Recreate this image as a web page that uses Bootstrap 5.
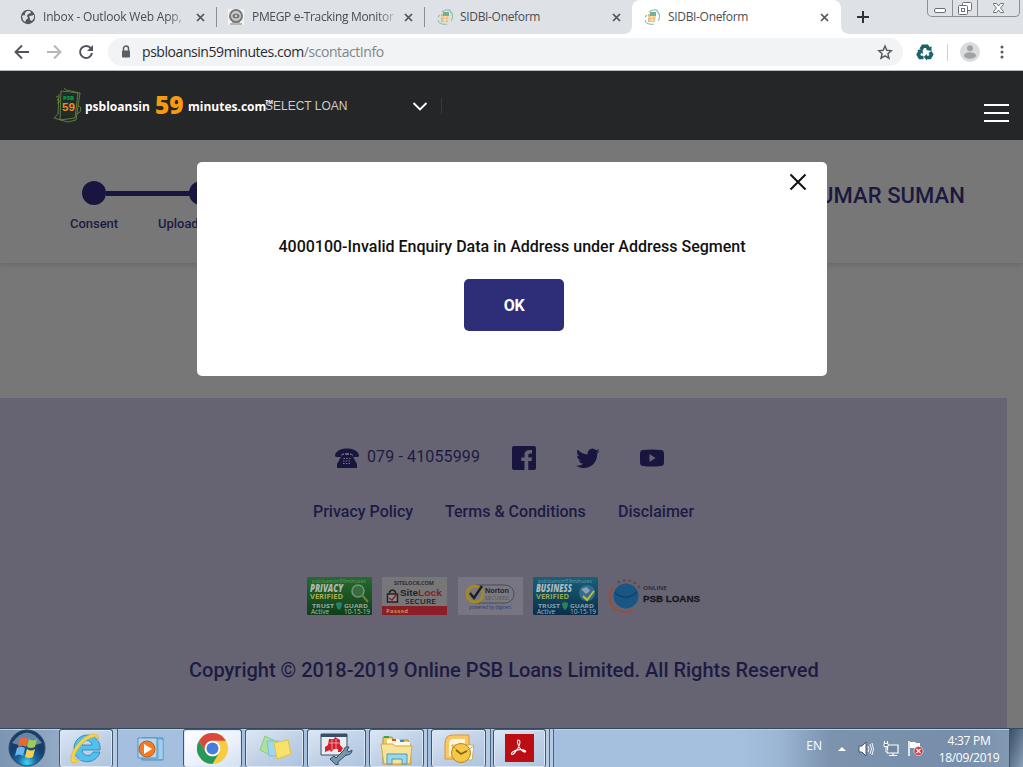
<!DOCTYPE html>
<html lang="en">
<head>
<meta charset="utf-8">
<meta name="viewport" content="width=device-width, initial-scale=1">
<title>SIDBI-Oneform</title>
<link href="https://cdn.jsdelivr.net/npm/bootstrap@5.3.0/dist/css/bootstrap.min.css" rel="stylesheet">
<style>
:root{--navy:#18163f;--ink:#1d1b44;--ui:"Open Sans","Noto Sans",sans-serif}
html,body{height:100%;overflow:hidden}
body{font-family:Roboto,sans-serif;background:#777;color:var(--ink)}
svg{display:block;flex:none}
.desktop{width:1023px;height:767px}
/* browser chrome */
.tabstrip{height:34px;background:#dee1e6;font:12px/34px var(--ui);color:#4a4d52}
.tab-item{flex:none;padding-left:20px}
.tab-item .favicon{width:16px;height:16px;margin-right:7px}
.tab-title{width:142px;overflow:hidden;white-space:nowrap;letter-spacing:-.2px}
.tab-title.tight{letter-spacing:-.33px}
.tab-title.fade-end{-webkit-mask-image:linear-gradient(90deg,#000 125px,rgba(0,0,0,.25) 142px)}
.tab-sep{border-left:1px solid #8a8d92;height:20px}
.tab-active{background:#fff;border-radius:8px 8px 0 0;width:209px;height:34px}
.under-left{background:#fff}
.tab-before{background:#dee1e6;border-radius:0 0 8px 0;width:207px;height:34px}
.tab-after{background:#dee1e6;border-radius:0 0 0 8px}
.win-controls{height:17px;width:93px;border:1px solid #8b8f96;border-top:0;border-radius:0 0 5px 5px;margin-left:58px}
.win-controls>span{border-right:1px solid #8b8f96;height:16px}
.win-controls>span:last-child{border:0}
.toolbar-row{height:37px;background:#fff;border-bottom:1px solid #b6b8bb}
.omnibox{height:28px;width:795px;margin-left:14px;border-radius:14px;background:#f1f3f4;font:14px/28px var(--ui);color:#80868b;padding-left:11px}
.omnibox b{font-weight:400;color:#2a2b2e}
.url-text{letter-spacing:-.44px;width:744px;margin-left:9px}
/* site header */
.site-head{height:69px;background:#252627}
.brand-text{font:700 12px/20px "Open Sans",sans-serif;color:#fff;padding-top:2px}
.brand-text>span{flex:none}
.brand-text .big{font-size:24.5px;font-weight:800;color:#f79a10;line-height:20px;margin-top:-3px}
.loan-select{font:12px/20px "Liberation Sans",sans-serif;color:#ccc}
.burger span{display:block;width:25px;height:2px;background:#fff;margin-bottom:6px}
/* page */
.stepper-bar{height:123px;box-shadow:0 2px 5px rgba(0,0,0,.12);background:#777}
.step-label{font-weight:500;font-size:13px;line-height:16px;letter-spacing:-.03px}
.dot{width:24px;height:24px;border-radius:50%;background:var(--navy)}
.rail{width:85px;height:5px;background:var(--navy)}
.applicant{font-weight:500;font-size:22px;line-height:28px;letter-spacing:.1px;color:#1b193f}
.site-foot{width:1007px;height:330px;background:#666472}
.foot-phone{font-size:16px;letter-spacing:.13px;width:145px;padding-left:8px;margin-top:-2px}
.foot-links{font-weight:500;font-size:16px;line-height:20px}
.copy{font-size:20px;line-height:24px;font-weight:500;letter-spacing:-.005px;white-space:nowrap}
.alert-box{left:197px;top:162px;width:630px;height:214px;background:#fff;border-radius:5px;color:#111}
.alert-box .message{font-weight:500;font-size:16px;line-height:20px;white-space:nowrap}
.ok-btn{width:100px;height:52px;background:#2e2e78;border-radius:5px;border:0;color:#fff;font-weight:700;font-size:16px;padding-top:8px;letter-spacing:-.3px}
/* taskbar */
.taskbar{height:39px;background:linear-gradient(90deg,#7b94af 0,#8da5c0 45px,#a5c0df 115px,#a5c0df 740px,#9bb5d3 780px,#7c93ae 830px,#778eaa 960px,#8299b2 1010px);border-top:1px solid #35495e;box-shadow:inset 0 1px #bed1e6}
.task{height:38px;border:1px solid #44566b;border-bottom:0;border-radius:3px;background:linear-gradient(150deg,#dce7f4,#bfd0e6 55%,#adc4df);box-shadow:inset 0 0 0 1px #dbe7f4}
.task.lit{background:linear-gradient(150deg,#fff,#e9f0fa 60%,#d0dff1)}
.stack-edge{width:5px;height:38px;border-right:1px solid #50657d;background:#b5cae3}
.tray{font:12px/16px var(--ui);color:#fff}
.clock{letter-spacing:-.3px;line-height:17px}
.show-desk{width:14px;height:38px;border-left:1px solid #44566b;background:linear-gradient(110deg,#3c4f64,#6f879f 70%,#8ea4ba)}
</style>
</head>
<body>
<svg width="0" height="0" class="position-absolute">
  <defs>
    <g id="sidbi"><path d="M5 3C7 1 11 0 14 2M13 2c3 3 3 7 1 10M1 11c0 3 4 5 9 4M3 6l-2 2" fill="none" stroke="#8fc4b0" stroke-width="1.200"/><path d="M4 5h8l-1 8H4z" fill="#ecb56f"/><path d="M6 3h6v4H6z" fill="#74b09a"/><path d="M4 8h8M5 11h7M8 7v6" stroke="#fff5d5" stroke-width=".8"/></g>
    <path id="x" d="M1 1l7 7M8 1l-7 7" stroke="#505357" stroke-width="1.7" fill="none"/>
    <linearGradient id="gr" x2="0" y2="1"><stop stop-color="#246b2e"/><stop offset="1" stop-color="#113d1c"/></linearGradient>
    <linearGradient id="bl" x2="0" y2="1"><stop stop-color="#176178"/><stop offset="1" stop-color="#0b2d4a"/></linearGradient>
    <radialGradient id="orb" cy=".9"><stop stop-color="#45d5f4"/><stop offset=".5" stop-color="#176aa4"/><stop offset="1" stop-color="#173e6b"/></radialGradient>
  </defs>
</svg>
<div class="desktop d-flex flex-column position-relative">

  <div class="tabstrip d-flex">
    <div class="tab-item d-flex align-items-center" style="width:216px">
      <svg class="favicon" viewBox="0 0 16 16"><circle cx="8" cy="8" r="7.200" fill="#55585d"/><path d="M2 7l2-1 3 1 1 2-2 2-1 2-2-2zM7 2l3 0 1 2-3 1-1 2-2-1 0-2zM10 7l4-1 0 3-2 3-2-1 0-2-1-1z" fill="#dee1e6"/></svg>
      <span class="tab-title fade-end">Inbox - Outlook Web App,</span>
      <svg class="ms-auto" style="margin-right:11px" width="9" height="9"><use href="#x"/></svg>
    </div>
    <div class="tab-item d-flex align-items-center position-relative" style="width:209px;padding-left:0">
      <div class="tab-sep"></div>
      <svg class="favicon" style="margin-left:11px;margin-right:8px" viewBox="0 0 16 16"><path fill="#f5f5f5" d="M0 0h16v16H0z"/><circle cx="8" cy="7" r="6" fill="#ccc" stroke="#777" stroke-width="2"/><ellipse cx="8" cy="7" rx="3.500" ry="2.500" fill="#777"/><circle cx="8" cy="7" r="1" fill="#eee"/><path d="M2 15h12M4 13h8" stroke="#777"/></svg>
      <span class="tab-title tight fade-end">PMEGP e-Tracking Monitor</span>
      <svg class="ms-auto" style="margin-right:12px" width="9" height="9"><use href="#x"/></svg>
    </div>
    <div class="under-left">
      <div class="tab-before d-flex align-items-center">
        <div class="tab-sep" style="margin-left:-1px"></div>
        <svg style="margin-left:12px;margin-right:7px" width="16" height="16"><use href="#sidbi"/></svg>
        <span class="tab-title tight">SIDBI-Oneform</span>
        <svg style="margin-left:10px" width="9" height="9"><use href="#x"/></svg>
      </div>
    </div>
    <div style="background:#dee1e6"><div class="tab-active d-flex align-items-center">
      <svg style="margin-left:12px;margin-right:8px" width="16" height="16"><use href="#sidbi"/></svg>
      <span class="tab-title tight">SIDBI-Oneform</span>
      <svg style="margin-left:10px" width="9" height="9"><use href="#x"/></svg>
    </div></div>
    <div class="under-left flex-grow-1"><div class="tab-after d-flex h-100">
      <svg style="margin:11px 0 0 16px" width="12" height="12"><path d="M6 0v12M0 6h12" stroke="#303236" stroke-width="2"/></svg>
      <div class="win-controls d-flex">
        <span style="width:25px"><svg width="24" height="16"><rect x="6.500" y="8.500" width="11" height="4" rx="1.500" fill="#fff" stroke="#6b6e75"/></svg></span>
        <span style="width:25px"><svg width="24" height="16" fill="#fff" stroke="#6b6e75"><rect x="9.500" y="2.500" width="9" height="8" rx="1"/><rect x="5.500" y="5.500" width="9" height="9" rx="1"/><rect x="8.500" y="8.500" width="3" height="3"/></svg></span>
        <span class="flex-grow-1"><svg width="41" height="16"><path d="M15.500 3.500h3l2 2.500 2-2.500h3v1l-3 3.500 3 3.500v1h-3l-2-2.500-2 2.500h-3v-1l3-3.500-3-3.500z" fill="#fff" stroke="#6b6e75"/></svg></span>
      </div>
    </div></div>
  </div>

  <div class="toolbar-row d-flex align-items-center">
    <svg style="margin-left:14px" width="80" height="16" fill="none" stroke-width="1.900"><path d="M15 8H2M8 1.500L1.500 8 8 14.500" stroke="#515458"/><path d="M33 8h13M40 1.500L46.500 8 40 14.500" stroke="#b4b6b9"/><path d="M77 4.500A6 6 0 1 0 78 9" stroke="#515458" stroke-width="2"/><path d="M79 1v6h-6z" fill="#515458"/></svg>
    <div class="omnibox d-flex align-items-center">
      <svg style="margin-left:2px" width="12" height="14"><path d="M2.500 6V3.500a2.500 2.500 0 0 1 5 0V6" fill="none" stroke="#5b5e62" stroke-width="1.500"/><rect x="1" y="5.500" width="8" height="7" rx="1" fill="#5b5e62"/></svg>
      <span class="url-text"><b>psbloansin59minutes.com</b>/scontactInfo</span>
      <svg style="margin-left:-9px" width="16" height="16"><path d="M8 2l1.800 4.300 4.700.4-3.600 3 1.100 4.500L8 11.800l-4 2.400 1.100-4.500-3.600-3 4.700-.4z" fill="none" stroke="#55585c" stroke-width="1.400"/></svg>
    </div>
    <svg style="margin-left:13px" width="18" height="18" viewBox="0 0 18 18" fill="none" stroke="#1c6367" stroke-width="3.600"><path d="M5 6.500L7 3.300h4l1.500 2.500"/><path d="M14 9l1.500 2.500-1.700 3H10"/><path d="M7.500 14.500H4L2.300 11.500 4 8.500"/><g stroke="none" fill="#1c6367"><path d="M10 7l5.500 1V3zM11 11v6.500L7.800 14zM1 7l5.500-1L7 11z"/></g></svg>
    <div style="width:1px;height:17px;background:#cfd1d4;margin-left:13px"></div>
    <svg style="margin-left:12px" width="20" height="20"><circle cx="10" cy="10" r="10" fill="#dadbdd"/><circle cx="10" cy="6.200" r="3" fill="#a1a2a4"/><ellipse cx="10" cy="13.500" rx="6" ry="3.200" fill="#a1a2a4"/></svg>
    <svg style="margin-left:19px" width="6" height="16" fill="#55585c"><circle cx="3" cy="3" r="1.500"/><circle cx="3" cy="8" r="1.500"/><circle cx="3" cy="13" r="1.500"/></svg>
  </div>

  <header class="site-head d-flex align-items-center">
    <svg style="margin-left:53px" width="30" height="36" viewBox="0 0 30 36"><g fill="none" stroke="#64893e" stroke-width=".9"><path d="M8 3l17 2-3 25-15 2zM11 0l2 2 14 3-4 27M6 6l-1 20-4 4 14 4 8-2M3 9c3-1 4 1 1 3 3 0 4 2 0 3M25 18q4 0 2 6l-3 2"/></g><path d="M9 4l13 1-1 24-13-1z" fill="#222d28"/><text x="10" y="12" font-family="Open Sans" font-weight="800" font-size="5" textLength="11" lengthAdjust="spacingAndGlyphs" fill="#0b9c47">PSB</text><text x="9" y="23" font-family="Liberation Sans" font-weight="700" font-size="11" textLength="13" lengthAdjust="spacingAndGlyphs" fill="#f28a17">59</text></svg>
    <div class="brand-text d-flex align-items-center text-nowrap" style="margin-left:2px;width:180px"><span style="width:70px">psbloansin</span><span class="big" style="width:33px">59</span><span>minutes.com</span><span style="font-size:5px;margin-top:-9px;margin-left:-1px">TM</span></div>
    <span class="loan-select text-nowrap" style="width:147px">SELECT LOAN</span>
    <svg width="16" height="12"><path d="M1.500 3l6.500 6.500L14.500 3" fill="none" stroke="#fff" stroke-width="1.900"/></svg>
    <div style="width:1px;height:16px;background:#393a3c;margin-left:13px"></div>
    <div class="burger ms-auto" style="margin-right:14px;padding-top:21px"><span></span><span></span><span></span></div>
  </header>

  <main class="flex-grow-1 d-flex flex-column">
    <section class="stepper-bar d-flex">
      <div style="padding:41px 0 0 70px;width:500px">
        <div class="d-flex align-items-center" style="margin-left:12px"><div class="dot"></div><div class="rail"></div><div class="dot" style="margin-left:-2px"></div></div>
        <div class="d-flex step-label" style="margin-top:11px"><span style="width:88px">Consent</span><span>Upload</span></div>
      </div>
      <div class="applicant ms-auto" style="padding-top:42px;margin-right:58px">UMAR SUMAN</div>
    </section>
    <footer class="site-foot mt-auto d-flex flex-column">
      <div class="d-flex align-items-center" style="margin:47px 0 0 335px;height:26px">
        <svg width="24" height="20" viewBox="0 0 24 20"><path d="M0 8C0-2 24-2 24 8l-1 1h-5l-.5-3c-3-1.500-8-1.500-11 0L6 9H1z" fill="#18163f"/><path d="M7 7h2V5h1v2h4V5h1v2h2l5 9v4H2v-4z" fill="#18163f"/><path d="M8.500 10.500h7M8 13h8M8 15.500h8" stroke="#77758a" stroke-width="1" stroke-dasharray="1.500 1.300"/></svg>
        <span class="foot-phone">079 - 41055999</span>
        <svg style="margin-left:8px" width="24" height="24"><rect width="24" height="24" rx="2" fill="#18163f"/><path d="M16.300 24v-9h3.200l.5-3.600h-3.700V9.200c0-1.100.4-1.800 1.900-1.800H20V4.100c-4.600-.7-7.500.7-7.500 4.500v2.800H9.300V15h3.200v9z" fill="#666472"/></svg>
        <svg style="margin-left:40px" width="24" height="24" viewBox="0 0 24 24"><path d="M23.600 4.900c-.9.400-1.800.7-2.700.8a4.800 4.800 0 0 0 2.100-2.700c-1 .6-2 1-3.100 1.200a4.800 4.800 0 0 0-8.200 4.400A13.700 13.700 0 0 1 1.800 3.600a4.800 4.800 0 0 0 1.500 6.500c-.8 0-1.500-.2-2.200-.6v.1a4.800 4.800 0 0 0 3.900 4.700c-.7.200-1.500.2-2.200.1a4.800 4.800 0 0 0 4.500 3.300A9.700 9.700 0 0 1 .2 19.700c9.600 6 21.500-.2 21-12.400 1-.7 1.800-1.500 2.400-2.400z" fill="#18163f"/></svg>
        <svg style="margin-left:40px" width="24" height="18"><path d="M3 1Q12 0 21 1q3 0 3 4v8q0 4-3 4-9 1-18 0-3 0-3-4V5q0-4 3-4z" fill="#18163f"/><path d="M9.500 5v8l6-4z" fill="#666472"/></svg>
      </div>
      <div class="foot-links d-flex text-nowrap" style="margin:31px 0 0 313px"><span style="width:132px">Privacy Policy</span><span style="width:173px">Terms &amp; Conditions</span><span>Disclaimer</span></div>
      <div class="d-flex" style="margin:54px 0 0 307px;font-family:'Open Sans'">
        <svg width="65" height="40" viewBox="0 0 65 40"><rect y="1" width="65" height="38" rx="1" fill="url(#gr)"/><circle cx="51" cy="15" r="6" fill="#356d3d" stroke="#769278" stroke-width="1.500"/><path d="M55 19l6 7" stroke="#6d7f45" stroke-width="2"/><text x="5" y="7" font-size="6" fill="#68936b" textLength="54" lengthAdjust="spacingAndGlyphs">psbloansin59minutes</text><text x="3" y="16" font-size="10" font-weight="800" font-style="italic" fill="#b0b9ae" textLength="33" lengthAdjust="spacingAndGlyphs">PRIVACY</text><text x="3" y="23" font-size="7" font-weight="700" fill="#a4ad51" textLength="33" lengthAdjust="spacingAndGlyphs">VERIFIED</text><text x="5" y="31.500" font-size="5" font-weight="700" fill="#9aaa9c" textLength="22" lengthAdjust="spacingAndGlyphs">TRUST</text><text x="37" y="31.500" font-size="5" font-weight="700" fill="#9aaa9c" textLength="24" lengthAdjust="spacingAndGlyphs">GUARD</text><path d="M29 27l3-1 3 1q0 5-3 7-3-2-3-7" fill="#26806a"/><text x="4" y="38" font-size="6.500" fill="#b1bcaf">Active</text><text x="37" y="38" font-size="6.500" fill="#b1bcaf" textLength="26">10-15-19</text></svg>
        <svg style="margin-left:10px" width="65" height="40" viewBox="0 0 65 40"><rect y="1" width="65" height="38" fill="#777678"/><path d="M0 30h65v9H0z" fill="#8b1e27"/><text x="12" y="9" font-size="6" font-weight="700" fill="#302d32" textLength="40" lengthAdjust="spacingAndGlyphs">SITELOCK.COM</text><path d="M7.500 18v-2q3-4 6 0v2" fill="none" stroke="#222" stroke-width="1.500"/><rect x="5.500" y="18" width="10" height="8" fill="#8a898b" stroke="#222" stroke-width="1.500"/><path d="M7 22l3 2 5-6" fill="none" stroke="#8e1e26" stroke-width="1.500"/><text x="18" y="20" font-size="9.500" font-weight="700" font-family="Liberation Sans" fill="#211f23" textLength="18" lengthAdjust="spacingAndGlyphs">Site</text><text x="36" y="20" font-size="9.500" font-weight="700" font-family="Liberation Sans" fill="#831e26" textLength="24" lengthAdjust="spacingAndGlyphs">Lock</text><text x="23" y="27.500" font-size="7.500" font-weight="600" fill="#242126" textLength="31" lengthAdjust="spacingAndGlyphs">SECURE</text><text x="4" y="37" font-size="6" font-weight="700" fill="#c98b51" textLength="22">Passed</text></svg>
        <svg style="margin-left:11px" width="65" height="40" viewBox="0 0 65 40"><rect y="1" width="65" height="38" fill="#777582"/><rect x="9" y="9" width="47" height="18" rx="9" fill="#7b7980" stroke="#4d4b55"/><circle cx="17" cy="18" r="8" fill="none" stroke="#a28b24" stroke-width="3"/><path d="M12 17l4 5 8-12" fill="none" stroke="#1f1e2b" stroke-width="2.500"/><text x="27" y="17" font-size="8" font-weight="700" font-family="Liberation Sans" fill="#252331" textLength="24" lengthAdjust="spacingAndGlyphs">Norton</text><text x="27" y="24" font-size="5" fill="#55535f" textLength="24">SECURED</text><text x="11" y="33" font-size="5.500" fill="#283c73" textLength="42" lengthAdjust="spacingAndGlyphs">powered by digicert</text></svg>
        <svg style="margin-left:10px" width="65" height="40" viewBox="0 0 65 40"><rect y="1" width="65" height="38" rx="1" fill="url(#bl)"/><circle cx="54" cy="17" r="8" fill="#336b90"/><path d="M48 13l6-2 3 4-4 3zM57 19l4-3" fill="#89a2af"/><path d="M50 20l4 4 7-9" fill="none" stroke="#b7bf3a" stroke-width="2"/><text x="5" y="7" font-size="6" fill="#6798a9" textLength="54" lengthAdjust="spacingAndGlyphs">psbloansin59minutes</text><text x="3" y="16" font-size="10" font-weight="800" font-style="italic" fill="#acbac1" textLength="36" lengthAdjust="spacingAndGlyphs">BUSINESS</text><text x="3" y="23" font-size="7" font-weight="700" fill="#91a755" textLength="33" lengthAdjust="spacingAndGlyphs">VERIFIED</text><text x="5" y="31.500" font-size="5" font-weight="700" fill="#8ea4af" textLength="22" lengthAdjust="spacingAndGlyphs">TRUST</text><text x="37" y="31.500" font-size="5" font-weight="700" fill="#8ea4af" textLength="24" lengthAdjust="spacingAndGlyphs">GUARD</text><path d="M29 27l3-1 3 1q0 5-3 7-3-2-3-7" fill="#26845a"/><text x="4" y="38" font-size="6.500" fill="#a2b4be">Active</text><text x="37" y="38" font-size="6.500" fill="#a2b4be" textLength="26">10-15-19</text></svg>
        <svg style="margin-left:10px" width="95" height="40" viewBox="0 0 95 40"><circle cx="18" cy="20" r="12.500" fill="#195684"/><path d="M7 17q11 9 22-1" stroke="#123f6e" stroke-width="1.500" fill="none"/><path d="M5 11A15.500 15.500 0 0 0 25 34" fill="none" stroke="#a04a35" stroke-width="1.800"/><path d="M10 6.500A15.500 15.500 0 0 1 32 13" fill="none" stroke="#6d3b45" stroke-width="2" stroke-dasharray="2 3.500"/><text x="35" y="14" font-size="6" font-weight="600" fill="#26232d" textLength="24" lengthAdjust="spacingAndGlyphs">ONLINE</text><text x="35" y="26" font-family="Liberation Sans" font-size="9.500" font-weight="700" fill="#19171e" stroke="#19171e" stroke-width=".3" textLength="57" lengthAdjust="spacingAndGlyphs">PSB LOANS</text></svg>
      </div>
      <div class="copy" style="margin:42px 0 0 189px">Copyright © 2018-2019 Online PSB Loans Limited. All Rights Reserved</div>
    </footer>
  </main>

  <div class="taskbar d-flex">
    <svg style="margin-left:8px" width="38" height="38"><circle cx="19" cy="19" r="18" fill="url(#orb)" stroke="#304b66"/><path d="M4 14Q19-7 34 14q-15 6-30 0" fill="#a9c0d3" opacity=".55"/><path d="M12 10q4-3 8 0l-2 8q-4-3-8 0z" fill="#ed682f"/><path d="M21 10q4 3 8 0l-2 8q-4 2-8 0z" fill="#9fcd51"/><path d="M9 19q4-3 8 0l-2 8q-4-3-8 0z" fill="#67b9ed"/><path d="M19 20q4 3 8 0l-2 8q-4 2-8 0z" fill="#fbcf4c"/></svg>
    <div class="task d-flex justify-content-center" style="width:54px;margin-left:13px"><svg style="margin-top:3px" width="32" height="31" viewBox="0 0 32 31"><path d="M17 2a13 13 0 0 1 13 15H12c1 7 9 7 11 2h7C26 33 4 32 4 15 4 8 10 2 17 2zM12 12h10c-1-6-9-6-10 0z" fill="#52c0ef" fill-rule="evenodd" stroke="#2581b9" stroke-width=".8"/><path d="M3 30C-5 25 11 1 24 1q7 0 3 8 3-6-3-5C13 6 3 21 5 26q1 2 6 0-5 5-8 4z" fill="#f9d146" stroke="#d8a828" stroke-width=".5"/></svg></div><div class="stack-edge"></div>
    <div style="width:64px;padding:8px 0 0 19px"><svg width="32" height="28"><path d="M5 1h21v22H5z" fill="#84bce1" stroke="#438fc0"/><path d="M1 1h19v20H1z" fill="#b3d7ef" stroke="#4e96bf"/><path d="M23 3v19M25 3v19" stroke="#bfe0f5"/><circle cx="10" cy="12" r="8" fill="#f27b25" stroke="#cf5a10"/><path d="M7 7v10l8-5z" fill="#fff"/></svg></div>
    <div class="task lit d-flex justify-content-center" style="width:59px;margin-left:1px"><svg style="margin-top:3px" width="31" height="31" viewBox="0 0 30 30"><circle cx="15" cy="15" r="15" fill="#f8cb45"/><path d="M2 7.500A15 15 0 0 1 28 7.500H15A7.500 7.500 0 0 0 8.500 18.800z" fill="#d9483b"/><path d="M2 7.500A15 15 0 0 0 15 30l6.500-11.200A7.500 7.500 0 0 1 8.500 18.800z" fill="#26995a"/><circle cx="15" cy="15" r="7.500" fill="#fff"/><circle cx="15" cy="15" r="5.800" fill="#457edc"/></svg></div>
    <div class="task d-flex justify-content-center" style="width:59px;margin-left:3px"><svg style="margin-top:5px" width="36" height="28"><path d="M8 1l10 5-5 14L3 15z" fill="#aee19b" stroke="#8cca86"/><path d="M10 6h12v15H12z" fill="#9fd7f1" stroke="#82bddc"/><path d="M17 8l14-3 3 14-14 5z" fill="#f8e26b" stroke="#e1c340"/></svg></div>
    <div class="task d-flex justify-content-center" style="width:59px;margin-left:3px"><svg style="margin-top:3px" width="34" height="32"><path d="M1 1h26v21H1z" fill="#e9edf1" stroke="#354d67"/><path d="M1 1h26v3H1z" fill="#35506a"/><path d="M9 6h5l1-2 5 3v5l3 3-2 4h-3v-3h-4l-3 3-1-2-5 2v-5l3-2z" fill="#d51f2c"/><path d="M9 10h12M12 6v11M16 6v11" stroke="#f6c6c9" stroke-width=".7"/><path d="M10 26l4-3 2 2 8-8q0-4 5-3l-2 3 2 2 3-2q0 5-6 5l-8 7v3l-3-1z" fill="#7895ab" stroke="#354d60"/></svg></div>
    <div class="task d-flex justify-content-center" style="width:55px;margin-left:3px"><svg style="margin-top:4px" width="34" height="32"><path d="M3 3h9l2 3h14l2 4 1 20H3z" fill="#eccb67" stroke="#b59135"/><path d="M7 5h12l2 3h9v5H7z" fill="#fff8dd"/><path d="M1 10h12l2 2h17l-2 18H4z" fill="#f8e398" stroke="#cfaa49"/><path d="M4 3h5" stroke="#33a849" stroke-width="2"/><path d="M12 6h4" stroke="#d95235" stroke-width="2"/><path d="M20 7h4" stroke="#338fcb" stroke-width="2"/><path d="M7 30V20h20v10h-5v-5H12v5z" fill="#9ad6ed" stroke="#4d9abd"/></svg></div><div class="stack-edge" style="width:4px"></div>
    <div class="task d-flex justify-content-center" style="width:55px;margin-left:3px"><svg style="margin-top:3px" width="34" height="32"><path d="M3 26V10q0-8 8-8h16v24z" fill="#f6c867" stroke="#dc962b"/><path d="M7 23V11q0-5 5-5h11v17z" fill="#fff6da"/><path d="M10 12h22l-2 15-18-1z" fill="#fff" stroke="#d5ac56"/><circle cx="19" cy="20" r="9.500" fill="#f5c944" stroke="#b98221"/><path d="M10 12l9 9 13-8" fill="none" stroke="#d3a13b"/><path d="M14 17l5 4 6-3" fill="none" stroke="#8d611b" stroke-width="1.800"/></svg></div><div class="stack-edge"></div>
    <div class="task d-flex justify-content-center" style="width:53px;margin-left:2px"><svg style="margin-top:4px" width="29" height="28"><rect width="29" height="28" fill="#bc0d13"/><path d="M13.500 6c3 0 1 8-4 13-3 3-4 1-2-1 4-3 10-3 13-1 1 2-3 1-5-2-3-4-4-9-2-9" fill="none" stroke="#fff" stroke-width="1.100"/></svg></div><div class="stack-edge" style="width:4px"></div><div class="stack-edge" style="width:4px"></div>
    <div class="tray d-flex ms-auto">
      <span style="margin:9px 16px 0 0">EN</span>
      <svg style="margin-top:18px" width="8" height="5"><path d="M4 0l4 4H0z" fill="#fff"/></svg>
      <svg style="margin:12px 0 0 12px" width="16" height="16"><path d="M1 5h3l4-4v14l-4-4H1z" fill="#fff" stroke="#40566d"/><path d="M10 5q2 3 0 6M12 3q3 5 0 10M14 2q3 6 0 12" fill="none" stroke="#fff" stroke-width=".9"/></svg>
      <svg style="margin:12px 0 0 9px" width="16" height="16"><path d="M4.500 4h10.500v8H4.500zM6 14.500h8M10 12v2.500" fill="#71879f" stroke="#fff" stroke-width="1.200"/><path d="M1 2.500h4v3H1zM3 6v5h2M1.500 0v2M4.500 0v2" fill="#5c7289" stroke="#fff"/></svg>
      <svg style="margin:11px 0 0 8px" width="17" height="17"><path d="M2 1v15" stroke="#fff" stroke-width="1.500"/><path d="M3 2h5l1 1h4v7H8L7 8H3z" fill="#fff"/><circle cx="11.500" cy="11" r="4.500" fill="#cf3941" stroke="#fff" stroke-width=".6"/><path d="M9.500 9l4 4M13.500 9l-4 4" stroke="#fff" stroke-width="1.300"/></svg>
      <div class="clock text-center" style="width:68px;margin:3px 6px 0 11px">4:37 PM<br>18/09/2019</div>
      <div class="show-desk"></div>
    </div>
  </div>

  <div class="alert-box position-absolute d-flex flex-column align-items-center" role="dialog">
    <svg class="align-self-end" style="margin:11px 20px 0 0" width="18" height="18"><path d="M1.500 1.500l15 15M16.500 1.500l-15 15" stroke="#111" stroke-width="2"/></svg>
    <div class="message" style="margin-top:46px">4000100-Invalid Enquiry Data in Address under Address Segment</div>
    <button class="btn ok-btn" style="margin:22px 0 0 4px">OK</button>
  </div>
</div>
<script src="https://cdn.jsdelivr.net/npm/bootstrap@5.3.0/dist/js/bootstrap.bundle.min.js"></script>
</body>
</html>
